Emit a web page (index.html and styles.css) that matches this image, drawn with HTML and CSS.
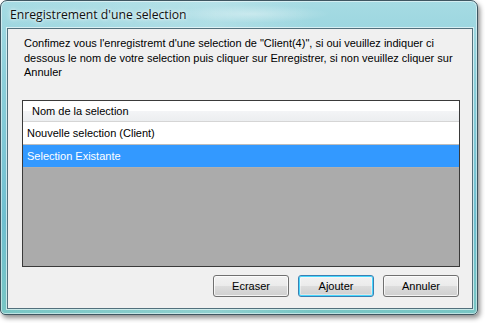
FILE: index.html
```html
<!DOCTYPE html>
<html lang="fr">
<head>
<meta charset="utf-8">
<title>Enregistrement d'une selection</title>
<link rel="stylesheet" href="styles.css">
</head>
<body>
<div class="window">
  <div class="titlebar"><span class="title">Enregistrement d'une selection</span><span class="glow"></span></div>
  <div class="client">
    <p class="message">Confimez vous l'enregistremt d'une selection de "Client(4)", si oui veuillez indiquer ci dessous le nom de votre selection puis cliquer sur Enregistrer, si non veuillez cliquer sur Annuler</p>
    <div class="listview">
      <div class="header"><span class="col">Nom de la selection</span></div>
      <div class="row">Nouvelle selection (Client)</div>
      <div class="row selected">Selection Existante</div>
      <div class="empty"></div>
    </div>
    <div class="buttons">
      <button class="btn">Ecraser</button>
      <button class="btn default">Ajouter</button>
      <button class="btn">Annuler</button>
    </div>
  </div>
</div>
</body>
</html>
```
FILE: styles.css
```css
html, body {
  margin: 0;
  padding: 0;
  background: #ffffff;
  width: 485px;
  height: 323px;
  overflow: hidden;
}
.window {
  width: 476px;
  height: 313px;
  margin: 0;
  border: 1px solid #3f5661;
  border-radius: 7px 7px 5px 5px;
  background:
    linear-gradient(90deg, rgba(255,255,255,0) 0%, rgba(255,255,255,0.18) 45%, rgba(255,255,255,0) 65%),
    linear-gradient(180deg, #a6dbe3 0%, #8ccfda 25%, #6fbfd0 70%, #78c6c4 100%);
  box-shadow: 2px 3px 5px rgba(0,0,0,0.45), inset 0 0 0 1px rgba(255,255,255,0.5);
  display: flex;
  flex-direction: column;
  position: relative;
}
.titlebar {
  height: 27px;
  display: flex;
  align-items: center;
  padding-left: 9px;
  position: relative;
}
.title {
  font-family: "Open Sans", "DejaVu Sans", sans-serif;
  font-size: 12.2px;
  color: #101010;
  text-shadow: 0 0 6px rgba(255,255,255,0.9), 0 0 3px rgba(255,255,255,0.9);
}
.glow {
  position: absolute;
  left: 170px;
  top: 4px;
  width: 160px;
  height: 18px;
  background: radial-gradient(ellipse at center, rgba(255,255,255,0.35), rgba(255,255,255,0) 70%);
}
.client {
  margin: 0 4px 5px 6px;
  flex: 1;
  background: #f0f0f0;
  border: 1px solid #52707c;
  box-shadow: 0 0 0 1px rgba(255,255,255,0.6);
  display: flex;
  flex-direction: column;
  font-family: "Liberation Sans", Arial, sans-serif;
  font-size: 11px;
  color: #000;
}
.message {
  margin: 0;
  padding: 7px 12px 0 16px;
  line-height: 14.5px;
  height: 64px;
}
.listview {
  margin: 0 12px 0 14px;
  height: 165px;
  border: 1px solid #3a3a3a;
  background: #ababab;
  display: flex;
  flex-direction: column;
}
.header {
  height: 20px;
  background: linear-gradient(180deg, #ffffff 0%, #ffffff 50%, #f3f4f6 51%, #eceef0 100%);
  border-bottom: 1px solid #d5d5d5;
  display: flex;
  align-items: center;
}
.col {
  padding-left: 9px;
}
.row {
  height: 23px;
  line-height: 23px;
  padding-left: 4px;
  background: #ffffff;
  border-bottom: 1px solid #bdbdbd;
  box-sizing: border-box;
}
.row.selected {
  background: #3399ff;
  color: #ffffff;
  border-bottom: 1px solid #b0b0b0;
}
.empty {
  flex: 1;
  background: #ababab;
}
.buttons {
  display: flex;
  justify-content: flex-end;
  gap: 9px;
  padding: 8px 13px 0 0;
}
.btn {
  width: 76px;
  height: 22px;
  padding: 0;
  font-family: "Liberation Sans", Arial, sans-serif;
  font-size: 11px;
  color: #000;
  border: 1px solid #707070;
  border-radius: 3px;
  background: linear-gradient(180deg, #f2f2f2 0%, #ebebeb 49%, #dddddd 50%, #cfcfcf 100%);
  box-shadow: inset 0 0 0 1px rgba(255,255,255,0.75);
}
.btn.default {
  border-color: #3c7fb1;
  box-shadow: inset 0 0 0 1px #48d8ff, inset 0 0 0 2px rgba(255,255,255,0.4);
}
```
